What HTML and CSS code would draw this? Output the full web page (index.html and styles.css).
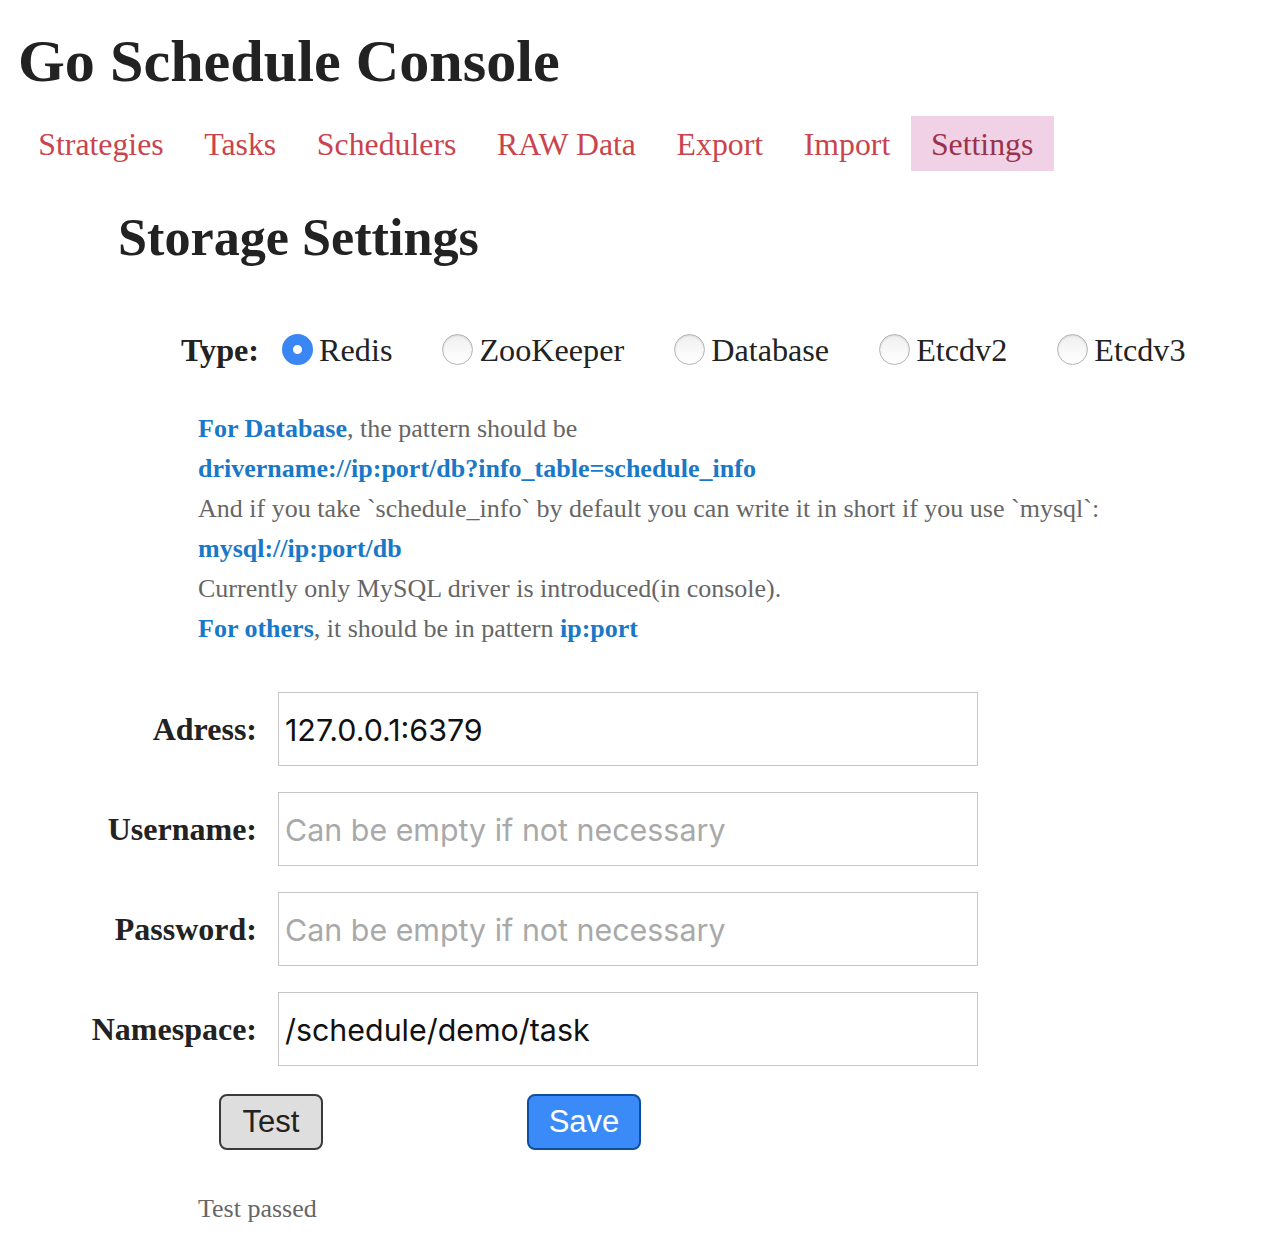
FILE: index.html
```html
<!DOCTYPE html>
<html>
<head>
<meta charset="utf-8">
<link rel="stylesheet" href="styles.css">
</head>
<body>
<h1 class="title">Go Schedule Console</h1>
<nav class="nav">
  <a class="nav-item">Strategies</a>
  <a class="nav-item">Tasks</a>
  <a class="nav-item">Schedulers</a>
  <a class="nav-item">RAW Data</a>
  <a class="nav-item">Export</a>
  <a class="nav-item">Import</a>
  <a class="nav-item active">Settings</a>
</nav>
<main class="settings">
  <h2 class="heading">Storage Settings</h2>
  <div class="type-row">
    <span class="type-label">Type:</span>
    <label class="opt"><span class="radio checked"></span>Redis</label>
    <label class="opt"><span class="radio"></span>ZooKeeper</label>
    <label class="opt"><span class="radio"></span>Database</label>
    <label class="opt"><span class="radio"></span>Etcdv2</label>
    <label class="opt"><span class="radio"></span>Etcdv3</label>
  </div>
  <div class="help">
    <p><b>For Database</b>, the pattern should be</p>
    <p><b>drivername://ip:port/db?info_table=schedule_info</b></p>
    <p>And if you take `schedule_info` by default you can write it in short if you use `mysql`:</p>
    <p><b>mysql://ip:port/db</b></p>
    <p>Currently only MySQL driver is introduced(in console).</p>
    <p><b>For others</b>, it should be in pattern <b>ip:port</b></p>
  </div>
  <div class="form">
    <label class="f-label">Adress:</label>
    <div class="f-input">127.0.0.1:6379</div>
    <label class="f-label">Username:</label>
    <div class="f-input ph">Can be empty if not necessary</div>
    <label class="f-label">Password:</label>
    <div class="f-input ph">Can be empty if not necessary</div>
    <label class="f-label">Namespace:</label>
    <div class="f-input">/schedule/demo/task</div>
  </div>
  <div class="buttons">
    <button class="btn btn-test">Test</button>
    <button class="btn btn-save">Save</button>
  </div>
  <p class="status">Test passed</p>
</main>
</body>
</html>
```

FILE: styles.css
```css
html, body {
  margin: 0;
  padding: 0;
  background: #fff;
}
body {
  font-family: "Liberation Serif", "Times New Roman", serif;
  color: #222;
}
.title {
  margin: 0;
  padding: 26px 0 0 18px;
  font-size: 60.2px;
  line-height: 70px;
  font-weight: bold;
  color: #222;
}
.nav {
  display: flex;
  margin: 20px 0 0 18px;
}
.nav-item {
  display: block;
  padding: 0 20.3px;
  height: 55px;
  line-height: 57px;
  font-size: 31.8px;
  color: #c9444d;
}
.nav-item.active {
  background: #f0d1e5;
  color: #9a3349;
}
.heading {
  margin: 31px 0 0 118px;
  font-size: 52.2px;
  line-height: 70px;
  font-weight: bold;
  color: #222;
}
.type-row {
  display: flex;
  align-items: center;
  margin: 58px 0 0 181px;
  font-size: 32.2px;
  height: 40px;
}
.type-label {
  font-weight: bold;
  margin-right: 23px;
}
.opt {
  display: flex;
  align-items: center;
  margin-right: 50px;
}
.radio {
  display: inline-block;
  box-sizing: border-box;
  width: 31px;
  height: 31px;
  border-radius: 50%;
  border: 1px solid #b4b4b4;
  background: linear-gradient(#f0f0f0, #fff);
  box-shadow: inset 0 1px 2px rgba(0, 0, 0, 0.12);
  margin-right: 6px;
  margin-top: -2px;
}
.radio.checked {
  border: 11px solid #3b86f5;
  background: #fff;
  box-shadow: none;
}
.help {
  margin: 39px 0 0 198px;
  font-size: 26px;
  line-height: 40px;
  color: #666;
}
.help p {
  margin: 0;
}
.help b {
  color: #1a78c8;
}
.form {
  display: grid;
  grid-template-columns: 257px 700px;
  column-gap: 21px;
  row-gap: 26px;
  margin: 43px 0 0 0;
}
.f-label {
  text-align: right;
  font-weight: bold;
  font-size: 32px;
  line-height: 74px;
  color: #222;
}
.f-input {
  box-sizing: border-box;
  height: 74px;
  border: 1px solid #c6c6c6;
  padding: 0 6px;
  font-family: Inter, "Liberation Sans", Arial, sans-serif;
  font-size: 30.4px;
  line-height: 74px;
  color: #111;
}
.f-input.ph {
  color: #a9a9a9;
}
.buttons {
  display: flex;
  margin: 28px 0 0 219px;
}
.btn {
  box-sizing: border-box;
  height: 56px;
  font-family: "Liberation Sans", Arial, sans-serif;
  font-size: 31px;
  border-radius: 8px;
  padding: 0;
}
.btn-test {
  width: 104px;
  background: #dedede;
  border: 2px solid #3a3a3a;
  color: #222;
}
.btn-save {
  width: 114px;
  margin-left: 204px;
  background: #3a8bf7;
  border: 2px solid #0d4ea0;
  color: #fff;
}
.status {
  margin: 44px 0 0 198px;
  font-size: 26px;
  color: #666;
}
```
